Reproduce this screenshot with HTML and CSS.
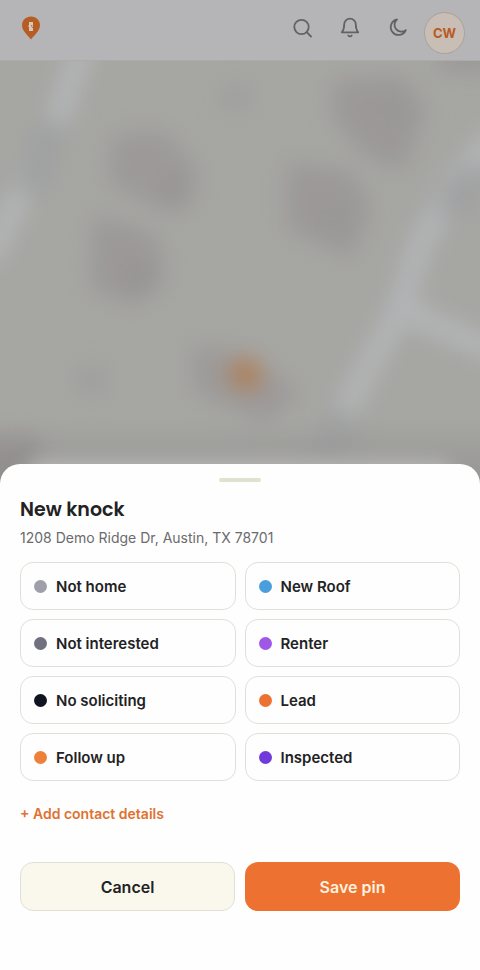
FILE: index.html
```html
<!DOCTYPE html>
<html lang="en">
<head>
<meta charset="utf-8">
<meta name="viewport" content="width=device-width, initial-scale=1">
<title>New knock</title>
<link rel="stylesheet" href="styles.css">
</head>
<body>
<div class="app">
  <header class="topbar">
    <a class="brand" href="#" aria-label="Home">
      <svg width="20" height="24" viewBox="0 0 20 24">
        <path fill="#b65d24" d="M10 .5C4.900.5 1 4.300 1 9.200c0 5.600 5.600 9.800 9 14.300 3.400-4.500 9-8.700 9-14.300C19 4.300 15.100.5 10 .5z"/>
        <path fill="#d6c8bd" d="M8 6h4v4.500l-1.200 1 1.200.5v3H8v-3.500l-.8-1.500.8-1z"/>
        <path fill="#b65d24" d="M10.200 9h1v1.500h-1z"/>
      </svg>
    </a>
    <nav class="actions">
      <button class="icon" type="button" aria-label="Search">
        <svg width="24" height="24" viewBox="0 0 24 24"><circle cx="11.500" cy="11" r="7.200"/><path d="M16.700 16.200l4.300 4.300"/></svg>
      </button>
      <button class="icon" type="button" aria-label="Notifications">
        <svg width="24" height="24" viewBox="0 0 24 24"><path d="M6.200 8.500a5.800 5.800 0 0 1 11.600 0c0 4.200.8 6 2.400 7.800H3.800C5.400 14.500 6.200 12.700 6.200 8.500z"/><path d="M10.300 19.500a2 2 0 0 0 3.400 0"/></svg>
      </button>
      <button class="icon" type="button" aria-label="Dark mode">
        <svg width="24" height="24" viewBox="0 0 24 24"><path d="M11 3.500a7.800 7.800 0 1 0 8.800 10.600A6.800 6.800 0 0 1 11 3.500z"/></svg>
      </button>
      <button class="avatar" type="button">CW</button>
    </nav>
  </header>

  <main class="map">
    <svg class="map-art" viewBox="0 60 480 428" preserveAspectRatio="xMidYMin slice" aria-hidden="true">
      <defs>
        <filter id="soft" filterUnits="userSpaceOnUse" x="-60" y="0" width="600" height="560" color-interpolation-filters="sRGB"><feGaussianBlur stdDeviation="11"/></filter>
        <filter id="edge" filterUnits="userSpaceOnUse" x="-60" y="380" width="600" height="160" color-interpolation-filters="sRGB"><feGaussianBlur stdDeviation="9"/></filter>
        <linearGradient id="shade" x1="0" y1="0" x2="0" y2="1">
          <stop offset="0" stop-color="#929190" stop-opacity="0"/>
          <stop offset="1" stop-color="#8e8d8c" stop-opacity=".75"/>
        </linearGradient>
      </defs>
      <rect y="60" width="480" height="428" fill="#a6a6a3"/>
      <g filter="url(#soft)">
        <g fill="none" stroke="#b3b4b6" stroke-width="25">
          <path d="M88 30L58 118L22 190L-12 260"/>
          <path d="M500 130L455 182L420 245L398 312L350 400L315 480"/>
          <path d="M396 300L430 322L500 352"/>
        </g>
        <g fill="none" stroke="#9fa0a1" stroke-width="27">
          <path d="M54 122L28 192"/>
          <path d="M476 170L446 212"/>
          <path d="M346 412L318 470"/>
        </g>
        <g fill="#9b9897">
          <path d="M112 136L162 130L198 168L188 210L160 208L110 182z" fill="#9c9998"/>
          <path d="M94 214L158 236L164 282L136 304L92 288z"/>
          <path d="M334 80L402 76L426 108L402 170L366 154L334 118z"/>
          <path d="M288 162L352 172L370 206L352 256L288 228z"/>
          <path d="M194 344L246 354L298 390L268 422L194 390z" fill="#9c9998"/>
          <path d="M222 86h26v22h-26zM78 366h26v26h-26z" fill="#9e9f9d"/>
          <path d="M440 44h60v26h-60z"/>
          <path d="M-30 442L30 436L44 450L10 510H-30z" fill="#959090"/>
        </g>
        <g fill="#96949a" opacity=".4">
          <circle cx="394" cy="108" r="10"/>
          <circle cx="336" cy="220" r="10"/>
          <circle cx="174" cy="188" r="12" fill="#8e8e8d"/>
          <circle cx="140" cy="276" r="12" fill="#8e8e8d"/>
        </g>
        <circle cx="246" cy="373" r="16" fill="#ae8059"/>
      </g>
      <rect y="416" width="480" height="72" fill="url(#shade)"/>
      <rect x="24" y="460" width="432" height="60" rx="20" fill="#b8b8b6" filter="url(#edge)"/>
    </svg>
  </main>

  <form class="sheet" aria-labelledby="sheet-title">
    <div class="handle"></div>
    <h1 id="sheet-title">New knock</h1>
    <p class="address">1208 Demo Ridge Dr, Austin, TX 78701</p>
    <div class="options">
      <button type="button"><span class="dot gray"></span>Not home</button>
      <button type="button"><span class="dot blue"></span>New Roof</button>
      <button type="button"><span class="dot slate"></span>Not interested</button>
      <button type="button"><span class="dot purple"></span>Renter</button>
      <button type="button"><span class="dot black"></span>No soliciting</button>
      <button type="button"><span class="dot orange"></span>Lead</button>
      <button type="button"><span class="dot amber"></span>Follow up</button>
      <button type="button"><span class="dot violet"></span>Inspected</button>
    </div>
    <button class="add" type="button">+ Add contact details</button>
    <div class="footer">
      <button class="cancel" type="button">Cancel</button>
      <button class="save" type="submit">Save pin</button>
    </div>
  </form>
</div>
</body>
</html>
```
FILE: styles.css
```css
* { box-sizing: border-box; }

body {
  margin: 0;
  background: #a6a6a3;
  color: #222224;
  font-family: Inter, "Liberation Sans", sans-serif;
}

button {
  margin: 0;
  padding: 0;
  border: 0;
  background: none;
  color: inherit;
  font: inherit;
  cursor: pointer;
}

.app {
  display: flex;
  flex-direction: column;
  min-height: 100vh;
}

.topbar {
  display: flex;
  justify-content: space-between;
  height: 61px;
  padding: 12px 15px 0 21px;
  border-bottom: 1px solid #acaca7;
  background: #b5b5b7;
}

.brand { padding-top: 4px; height: 28px; }
.brand svg, .icon svg { display: block; }

.actions {
  display: flex;
  align-items: flex-start;
  gap: 24px;
}

.icon { padding-top: 4px; color: #626264; }

.icon svg {
  fill: none;
  stroke: currentColor;
  stroke-width: 1.8;
  stroke-linecap: round;
  stroke-linejoin: round;
}

.avatar {
  width: 41px;
  height: 42px;
  margin-left: -10px;
  border: 1px solid #a9a39b;
  border-radius: 50%;
  background: #c8beb5;
  color: #b95a23;
  font-size: 13px;
  font-weight: 700;
}

.map {
  position: relative;
  flex: 1;
  min-height: 200px;
  margin-bottom: -24px;
  overflow: hidden;
}

.map-art {
  position: absolute;
  inset: 0;
  width: 100%;
  height: 100%;
}

.sheet {
  position: relative;
  padding: 14px 20px 59px;
  border-radius: 20px 20px 0 0;
  background: #fefefe;
}

.handle {
  width: 42px;
  height: 4px;
  margin: 0 auto 14px;
  border-radius: 2px;
  background: #e1e1d0;
}

h1 {
  margin: 0;
  font-family: Poppins, Inter, sans-serif;
  font-size: 19px;
  font-weight: 600;
  line-height: 28px;
}

.address {
  margin: 4px 0 14px;
  color: #6b6b6d;
  font-size: 14px;
  line-height: 20px;
}

.options {
  display: grid;
  grid-template-columns: 1fr 1fr;
  gap: 9px;
}

.options button {
  display: flex;
  align-items: center;
  gap: 9px;
  height: 48px;
  padding: 0 13px;
  border: 1px solid #e1e0d8;
  border-radius: 13px;
  font-size: 15px;
  font-weight: 600;
}

.dot {
  width: 13px;
  height: 13px;
  border-radius: 50%;
}

.gray { background: #9f9faa; }
.blue { background: #499fdc; }
.slate { background: #70707f; }
.purple { background: #9f57e8; }
.black { background: #101320; }
.orange { background: #ec7231; }
.amber { background: #ee8139; }
.violet { background: #713bdb; }

.add {
  display: block;
  margin: 21px 0 36px;
  color: #df7230;
  font-size: 14px;
  font-weight: 600;
  line-height: 24px;
}

.footer {
  display: grid;
  grid-template-columns: 1fr 1fr;
  gap: 10px;
}

.footer button {
  height: 49px;
  border-radius: 13px;
  font-size: 16px;
  font-weight: 600;
}

.footer .cancel {
  border: 1px solid #e1e0d5;
  background: #faf8ed;
}

.footer .save {
  background: #ed7231;
  color: #fdf1df;
}
```
